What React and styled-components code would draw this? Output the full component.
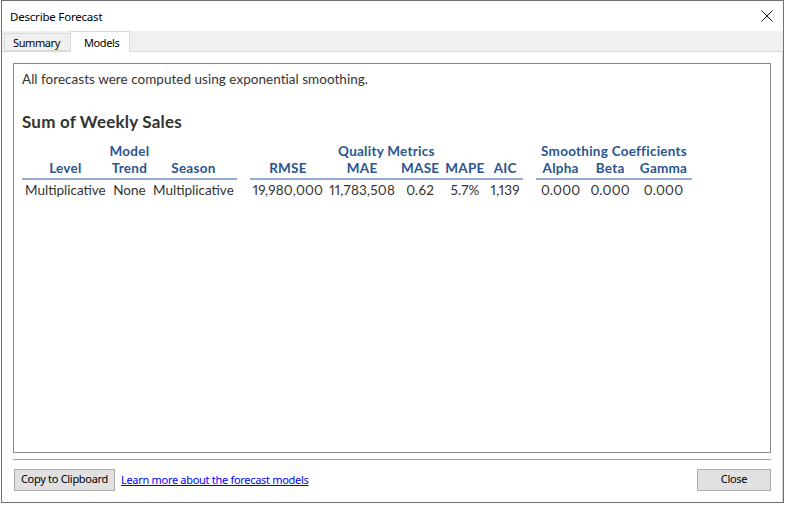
import React from "react";
import styled, { createGlobalStyle } from "styled-components";

const GlobalStyle = createGlobalStyle`
  html, body {
    margin: 0;
    padding: 0;
    background: #ffffff;
  }
`;

const models = [
  {
    title: "Model",
    columns: ["Level", "Trend", "Season"],
    values: ["Multiplicative", "None", "Multiplicative"],
    pad: 3,
    numeric: false,
  },
  {
    title: "Quality Metrics",
    columns: ["RMSE", "MAE", "MASE", "MAPE", "AIC"],
    values: ["19,980,000", "11,783,508", "0.62", "5.7%", "1,139"],
    pad: 3,
    numeric: true,
  },
  {
    title: "Smoothing Coefficients",
    columns: ["Alpha", "Beta", "Gamma"],
    values: ["0.000", "0.000", "0.000"],
    pad: 5,
    numeric: true,
  },
];

const CloseIcon = () => (
  <svg width="12" height="12" viewBox="0 0 12 12">
    <path d="M0.5 0.5 L11.5 11.5 M11.5 0.5 L0.5 11.5" stroke="#111" strokeWidth="1" fill="none" />
  </svg>
);

const App = () => {
  return (
    <Page>
      <GlobalStyle />
      <Dialog>
        <TitleBar>
          <Title>Describe Forecast</Title>
          <CloseButton>
            <CloseIcon />
          </CloseButton>
        </TitleBar>
        <TabStrip>
          <Tab>Summary</Tab>
          <Tab $active>Models</Tab>
        </TabStrip>
        <TabPage>
          <Panel>
            <Intro>All forecasts were computed using exponential smoothing.</Intro>
            <Heading>Sum of Weekly Sales</Heading>
            <Groups>
              {models.map((group) => (
                <GroupTable key={group.title}>
                  <thead>
                    <tr>
                      <GroupTitle colSpan={group.columns.length}>{group.title}</GroupTitle>
                    </tr>
                    <tr>
                      {group.columns.map((c) => (
                        <ColHead key={c} $pad={group.pad}>
                          {c}
                        </ColHead>
                      ))}
                    </tr>
                  </thead>
                  <tbody>
                    <tr>
                      {group.values.map((v, i) => (
                        <Cell key={i} $pad={group.pad} $numeric={group.numeric}>
                          {v}
                        </Cell>
                      ))}
                    </tr>
                  </tbody>
                </GroupTable>
              ))}
            </Groups>
          </Panel>
          <Separator />
          <Footer>
            <Button>Copy to Clipboard</Button>
            <LearnLink href="#">Learn more about the forecast models</LearnLink>
            <Spacer />
            <Button $wide>Close</Button>
          </Footer>
        </TabPage>
      </Dialog>
    </Page>
  );
};

const Page = styled.div`
  width: 788px;
  height: 506px;
  overflow: hidden;
  padding-left: 1px;
  box-sizing: border-box;
  background: #ffffff;
`;

const Dialog = styled.div`
  width: 783px;
  height: 503px;
  box-sizing: border-box;
  border: 1px solid #6f6f6f;
  background: #ffffff;
  display: flex;
  flex-direction: column;
  font-family: "Noto Sans", "Open Sans", sans-serif;
  font-size: 12px;
  color: #000;
`;

const TitleBar = styled.div`
  height: 30px;
  display: flex;
  align-items: center;
  padding: 0 7px 0 8px;
`;

const Title = styled.div`
  flex: 1;
  font-size: 11.5px;
  letter-spacing: -0.2px;
`;

const CloseButton = styled.div`
  width: 16px;
  height: 16px;
  display: flex;
  align-items: center;
  justify-content: center;
  margin-right: 1px;
`;

const TabStrip = styled.div`
  height: 20px;
  background: #f0f0f0;
  display: flex;
  align-items: flex-end;
  padding-left: 2px;
`;

const Tab = styled.div`
  box-sizing: border-box;
  height: ${(p) => (p.$active ? "21px" : "18px")};
  margin-bottom: ${(p) => (p.$active ? "-1px" : "0")};
  padding: ${(p) => (p.$active ? "0 10px 0 13px" : "0 10px 0 8px")};
  background: ${(p) => (p.$active ? "#ffffff" : "#f0f0f0")};
  border: 1px solid #d9d9d9;
  border-bottom: ${(p) => (p.$active ? "none" : "1px solid #d9d9d9")};
  border-right: ${(p) => (p.$active ? "1px solid #d9d9d9" : "none")};
  display: flex;
  align-items: center;
  font-size: 11px;
  letter-spacing: -0.4px;
  position: relative;
`;

const TabPage = styled.div`
  flex: 1;
  display: flex;
  flex-direction: column;
  padding: 11px 11px 0 11px;
  border-right: 1px solid #d9d9d9;
  border-top: 1px solid #d9d9d9;
`;

const Panel = styled.div`
  height: 390px;
  box-sizing: border-box;
  border: 1px solid #8a8a8a;
  padding: 7px 8px;
  font-family: "Lato", "Open Sans", sans-serif;
  font-variant-numeric: proportional-nums;
  color: #333333;
`;

const Intro = styled.div`
  font-size: 13.5px;
  line-height: 16px;
  letter-spacing: 0.03px;
`;

const Heading = styled.div`
  margin-top: 25px;
  font-size: 17px;
  line-height: 20px;
  font-weight: 700;
  letter-spacing: 0.2px;
  color: #333333;
`;

const Groups = styled.div`
  display: flex;
  gap: 13px;
  margin-top: 10px;
`;

const GroupTable = styled.table`
  border-collapse: collapse;
  font-size: 13.5px;
`;

const GroupTitle = styled.th`
  font-weight: 700;
  color: #2b5590;
  text-align: center;
  line-height: 18px;
  letter-spacing: 0.25px;
  padding: 0;
`;

const ColHead = styled.th`
  font-weight: 700;
  color: #2b5590;
  text-align: center;
  line-height: 17px;
  letter-spacing: 0.25px;
  padding: 0 ${(p) => p.$pad}px 1px;
  border-bottom: 2px solid #93acd0;
`;

const Cell = styled.td`
  text-align: center;
  line-height: 18px;
  padding: 1px ${(p) => p.$pad}px 0;
  white-space: nowrap;
  letter-spacing: ${(p) => (p.$numeric ? "0.2px" : "0")};
  color: #333333;
`;

const Separator = styled.div`
  height: 1px;
  background: #a0a0a0;
  margin-top: 6px;
`;

const Footer = styled.div`
  display: flex;
  align-items: center;
  margin-top: 9px;
  padding-left: 1px;
`;

const Button = styled.button`
  box-sizing: border-box;
  height: 22px;
  width: ${(p) => (p.$wide ? "74px" : "101px")};
  border: 1px solid #adadad;
  background: #e1e1e1;
  font-family: "Noto Sans", "Open Sans", sans-serif;
  font-size: 11px;
  line-height: 14px;
  letter-spacing: -0.3px;
  color: #000;
  padding: 0 0 2px;
  margin: 0;
`;

const LearnLink = styled.a`
  margin-left: 6px;
  margin-bottom: 2px;
  color: #0000ff;
  font-size: 11px;
  letter-spacing: -0.3px;
  text-decoration: underline;
`;

const Spacer = styled.div`
  flex: 1;
`;

export default App;
